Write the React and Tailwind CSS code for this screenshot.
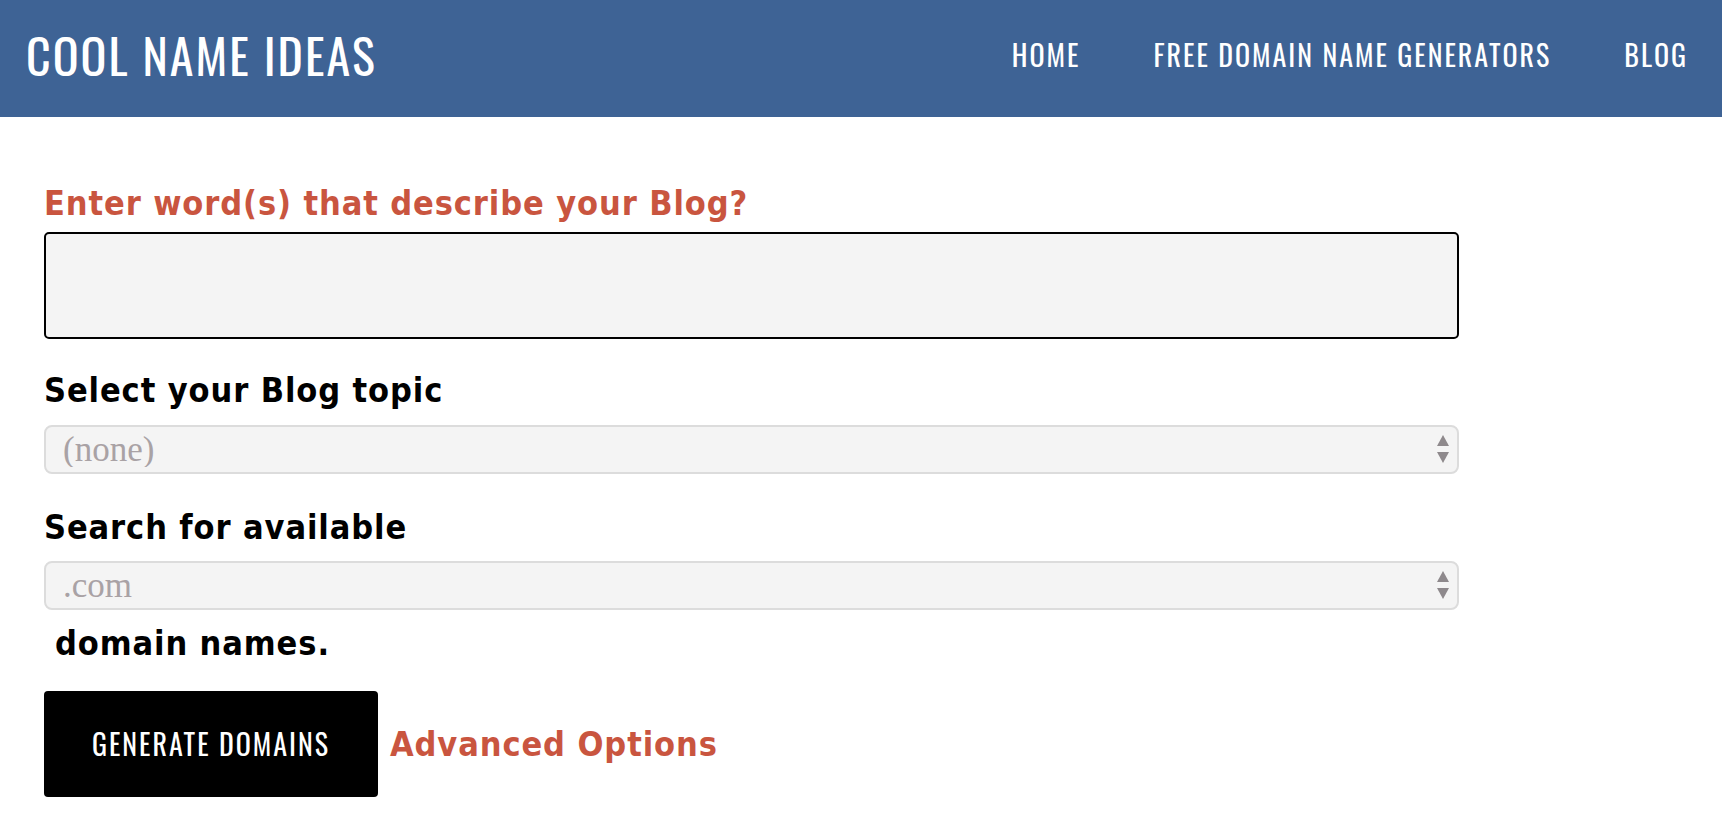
import { useState } from 'react';

const osw = "font-['Oswald','Roboto_Condensed',sans-serif]";
const label = "font-['DejaVu_Sans_Condensed','DejaVu_Sans',sans-serif] font-bold text-[34px] leading-[40px] tracking-[0.9px]";

function SelectBox({ value, options }) {
  return (
    <div className="relative h-[49px] w-[1415px]">
      <select
        defaultValue={value}
        className="h-full w-full appearance-none rounded-[8px] border-2 border-[#dcdcdc] bg-[#f4f4f4] pl-[17px] font-['Liberation_Serif',serif] text-[35px] leading-none text-[#a9a2a5] outline-none"
      >
        {options.map(o => <option key={o}>{o}</option>)}
      </select>
      {/* up / down arrows */}
      <svg className="pointer-events-none absolute right-[9px] top-[10px]" width="14" height="28" viewBox="0 0 14 28">
        <path d="M7 0 L13 11 L1 11 Z" fill="#8e898c" />
        <path d="M1 17 L13 17 L7 28 Z" fill="#8e898c" />
      </svg>
    </div>
  );
}

export default function App() {
  const [words, setWords] = useState('');

  return (
    <div className="min-h-screen bg-white">
      {/* Header */}
      <header className="flex h-[117px] items-center justify-between bg-[#3e6395] pb-[8px] pl-[26px] pr-[34px]">
        <a href="#" className={`${osw} text-[48px] font-normal leading-none tracking-[2px] text-white`}>COOL NAME IDEAS</a>
        <nav className={`${osw} flex gap-[73px] text-[28px] leading-none tracking-[2px] text-white`}>
          <a href="#">HOME</a>
          <a href="#">FREE DOMAIN NAME GENERATORS</a>
          <a href="#">BLOG</a>
        </nav>
      </header>

      {/* Form */}
      <form className="flex flex-col pl-[44px] pt-[66px]" onSubmit={e => e.preventDefault()}>
        <label className={`${label} text-[#c9553f]`}>Enter word(s) that describe your Blog?</label>
        <input
          type="text"
          value={words}
          onChange={e => setWords(e.target.value)}
          className="mt-[9px] h-[107px] w-[1415px] rounded-[5px] border-2 border-black bg-[#f4f4f4] px-4 text-[28px] outline-none"
        />

        <label className={`${label} mt-[31px] text-black`}>Select your Blog topic</label>
        <div className="mt-[15px]">
          <SelectBox value="(none)" options={['(none)', 'Business', 'Food', 'Travel', 'Technology', 'Fashion']} />
        </div>

        <label className={`${label} mt-[33px] text-black`}>Search for available</label>
        <div className="mt-[14px]">
          <SelectBox value=".com" options={['.com', '.net', '.org', '.co', '.io']} />
        </div>
        <span className={`${label} mt-[13px] pl-[11px] text-black`}>domain names.</span>

        <div className="mt-[28px] flex items-center gap-[12px]">
          <button
            type="submit"
            className={`${osw} h-[106px] w-[334px] rounded-[4px] bg-black text-[28px] tracking-[2px] text-white`}
          >
            GENERATE DOMAINS
          </button>
          <a href="#" className={`${label} text-[#c9553f]`}>Advanced Options</a>
        </div>
      </form>
    </div>
  );
}
